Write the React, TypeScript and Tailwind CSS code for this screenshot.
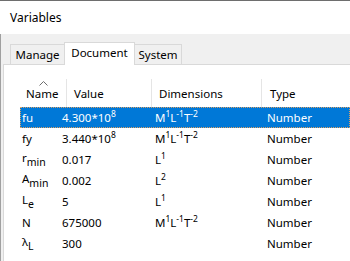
import React from "react";

const Sup = ({ children }: { children: React.ReactNode }) => (
  <span className="relative -top-[5px] text-[8.5px] leading-none">{children}</span>
);

const Sub = ({ base, sub }: { base: string; sub: string }) => (
  <span>
    <span className="relative -top-[2px]">{base}</span>
    <span className="relative top-[2px] text-[10.5px]">{sub}</span>
  </span>
);

type Row = { name: React.ReactNode; value: React.ReactNode; dim: React.ReactNode; type: string; sel?: boolean };

const MLT = (
  <span>
    M<Sup>1</Sup>L<Sup>-1</Sup>T<Sup>-2</Sup>
  </span>
);

const rows: Row[] = [
  { name: "fu", value: <span>4.300*10<Sup>8</Sup></span>, dim: MLT, type: "Number", sel: true },
  { name: "fy", value: <span>3.440*10<Sup>8</Sup></span>, dim: MLT, type: "Number" },
  { name: <Sub base="r" sub="min" />, value: "0.017", dim: <span>L<Sup>1</Sup></span>, type: "Number" },
  { name: <Sub base="A" sub="min" />, value: "0.002", dim: <span>L<Sup>2</Sup></span>, type: "Number" },
  { name: <Sub base="L" sub="e" />, value: "5", dim: <span>L<Sup>1</Sup></span>, type: "Number" },
  { name: "N", value: "675000", dim: MLT, type: "Number" },
  { name: <Sub base="λ" sub="L" />, value: "300", dim: "", type: "Number" },
];

export default function App() {
  return (
    <div
      className="w-[350px] h-[261px] overflow-hidden bg-white flex flex-col border-t border-[#6e6e6e] text-[11.5px] text-black"
      style={{ fontFamily: '"Segoe UI", "Noto Sans", sans-serif' }}
    >
      <div className="h-[33px] shrink-0 flex items-center pl-[10px] text-[12px]">Variables</div>
      <div className="flex-1 bg-[#f0f0f0] flex flex-col pl-[2px] border-l border-[#a0a0a0]">
        <div className="h-[30px] shrink-0 flex items-end pl-[7px] leading-[16px]">
          <div className="h-[20px] w-[54px] border-l border-t border-[#d9d9d9] flex items-center justify-center">Manage</div>
          <div className="h-[23px] w-[71px] -mb-px bg-white border-l border-t border-r border-[#d9d9d9] relative z-10 flex items-start pt-[2px] justify-center">
            Document
          </div>
          <div className="h-[20px] w-[47px] border-t border-r border-[#d9d9d9] flex items-center justify-center">System</div>
        </div>
        <div className="flex-1 bg-white border-t border-l border-[#d9d9d9] pl-[16px] pt-[12px]">
          <div className="grid grid-cols-[47px_85px_110px_1fr] h-[30px]">
            <div className="relative flex items-end pl-[6px] pb-[5px] border-r border-[#e5e5e5] mt-[2px]">
              <svg className="absolute left-[19px] top-[2px]" width="9" height="5" viewBox="0 0 9 5">
                <polyline points="0.5,4.5 4.5,0.5 8.5,4.5" fill="none" stroke="#6d6d6d" strokeWidth="1" />
              </svg>
              <span>Name</span>
            </div>
            <div className="flex items-end pl-[7px] pb-[5px] border-r border-[#e5e5e5] mt-[2px]">Value</div>
            <div className="flex items-end pl-[7px] pb-[5px] border-r border-[#e5e5e5] mt-[2px]">Dimensions</div>
            <div className="flex items-end pl-[8px] pb-[5px] mt-[2px]">Type</div>
          </div>
          {rows.map((r, i) => (
            <div
              key={i}
              className={
                "grid grid-cols-[41px_93px_112px_1fr] h-[21px] items-center " +
                (r.sel ? "bg-[#0078d7] text-white border border-dotted border-[#d9a066]" : "border border-transparent")
              }
            >
              <div className="pl-px whitespace-nowrap">{r.name}</div>
              <div className="whitespace-nowrap">{r.value}</div>
              <div className="whitespace-nowrap">{r.dim}</div>
              <div className="whitespace-nowrap">{r.type}</div>
            </div>
          ))}
        </div>
      </div>
    </div>
  );
}
